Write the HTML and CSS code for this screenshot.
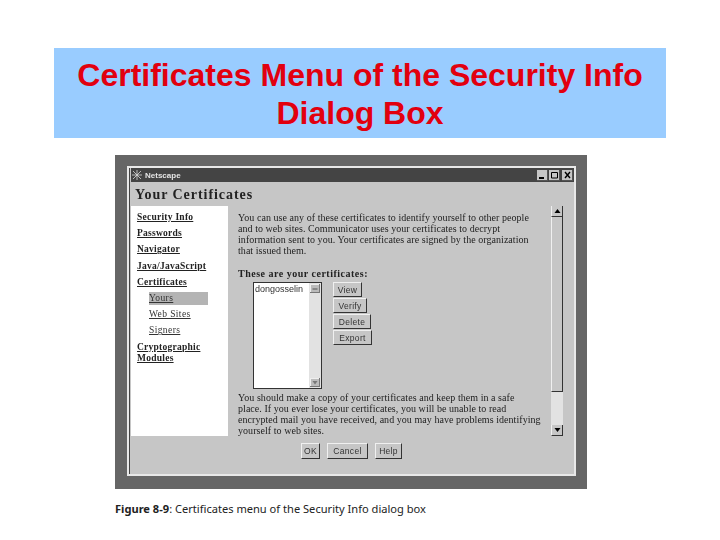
FILE: index.html
```html
<!DOCTYPE html>
<html lang="en">

<head>
    <meta charset="UTF-8" />
    <title>Certificates Menu of the Security Info Dialog Box</title>
    <link rel="stylesheet" href="styles.css">
</head>

<body>
    <header class="slide-title">
        <h1>Certificates Menu of the Security Info<br>Dialog Box</h1>
    </header>

    <main class="figure">
        <div class="frame">
            <div class="window">
                <div class="titlebar">
                    <svg class="app-icon" viewBox="0 0 10 10" width="10" height="10">
                        <path d="M5 0V10M0 5H10M1 1L9 9M9 1L1 9" stroke="#d8d8d8" stroke-width="0.8" />
                    </svg>
                    <span class="app-name">Netscape</span>
                    <div class="controls">
                        <span class="ctl">
                            <svg viewBox="0 0 11 10" width="11" height="10"><path d="M2 8H7" stroke="#000" stroke-width="2" /></svg>
                        </span>
                        <span class="ctl">
                            <svg viewBox="0 0 11 10" width="11" height="10"><path d="M2.5 2.5H8.5V8H2.5Z" stroke="#000" fill="none" /></svg>
                        </span>
                        <span class="ctl ctl-close">
                            <svg viewBox="0 0 11 10" width="11" height="10"><path d="M3 2L8 8M8 2L3 8" stroke="#000" stroke-width="1.4" /></svg>
                        </span>
                    </div>
                </div>

                <h2 class="heading">Your Certificates</h2>

                <div class="panes">
                    <nav class="sidebar">
                        <a class="nav-item">Security Info</a>
                        <a class="nav-item">Passwords</a>
                        <a class="nav-item">Navigator</a>
                        <a class="nav-item">Java/JavaScript</a>
                        <a class="nav-item">Certificates</a>
                        <a class="nav-sub nav-sub-active">Yours</a>
                        <a class="nav-sub">Web Sites</a>
                        <a class="nav-sub">Signers</a>
                        <a class="nav-item nav-wrap">Cryptographic<br>Modules</a>
                    </nav>

                    <section class="content">
                        <p class="intro">You can use any of these certificates to identify yourself to other people<br>and to web sites. Communicator uses your certificates to decrypt<br>information sent to you. Your certificates are signed by the organization<br>that issued them.</p>
                        <h3 class="list-label">These are your certificates:</h3>

                        <div class="cert-row">
                            <div class="listbox">
                                <div class="listbox-items">dongosselin</div>
                                <div class="listbox-scroll">
                                    <span class="arrow-btn">
                                        <svg viewBox="0 0 10 9" width="10" height="9"><path d="M2.5 5H7.5" stroke="#555" /></svg>
                                    </span>
                                    <span class="arrow-btn">
                                        <svg viewBox="0 0 10 9" width="10" height="9"><path d="M5 6.5L7.5 3H2.5Z" fill="#777" /></svg>
                                    </span>
                                </div>
                            </div>
                            <div class="cert-actions">
                                <button class="btn btn-view">View</button>
                                <button class="btn btn-verify">Verify</button>
                                <button class="btn btn-delete">Delete</button>
                                <button class="btn btn-export">Export</button>
                            </div>
                        </div>

                        <p class="note">You should make a copy of your certificates and keep them in a safe<br>place. If you ever lose your certificates, you will be unable to read<br>encrypted mail you have received, and you may have problems identifying<br>yourself to web sites.</p>
                    </section>

                    <div class="scrollbar">
                        <span class="sb-btn">
                            <svg viewBox="0 0 11 10" width="11" height="10"><path d="M5.5 3L8.5 7H2.5Z" fill="#000" /></svg>
                        </span>
                        <span class="sb-thumb"></span>
                        <span class="sb-track"></span>
                        <span class="sb-btn">
                            <svg viewBox="0 0 11 10" width="11" height="10"><path d="M5.5 7L8.5 3H2.5Z" fill="#000" /></svg>
                        </span>
                    </div>
                </div>

                <div class="footer">
                    <button class="btn btn-ok">OK</button>
                    <button class="btn btn-cancel">Cancel</button>
                    <button class="btn btn-help">Help</button>
                </div>
            </div>
        </div>

        <p class="caption"><b>Figure 8-9</b>: Certificates menu of the Security Info dialog box</p>
    </main>
</body>

</html>
```

FILE: styles.css
```css
* {
    margin: 0;
    padding: 0;
    box-sizing: border-box;
}

body {
    background-color: #fff;
    font-family: 'Liberation Serif', serif;
}

.slide-title {
    margin: 48px 54px 0;
    height: 90px;
    background-color: #99ccff;
    padding-top: 8px;
    text-align: center;
}

.slide-title h1 {
    font-family: 'Liberation Sans', sans-serif;
    font-size: 32px;
    line-height: 38px;
    font-weight: bold;
    color: #e2000f;
}

.figure {
    margin: 17px 0 0 115px;
    width: 472px;
}

/* the screenshot inside the slide is a soft scan */
.frame {
    height: 334px;
    background-color: #666;
    padding: 11px 11px 13px 12px;
    filter: blur(0.4px);
}

.window {
    height: 310px;
    background-color: #c6c6c6;
    border: 2px solid #e8e8e8;
    box-shadow: inset 1px 0 0 #444;
    display: flex;
    flex-direction: column;
    padding-left: 2px;
}

.titlebar {
    height: 14px;
    flex: none;
    background-color: #444;
    display: flex;
    align-items: center;
    padding-left: 1px;
}

.app-name {
    margin-left: 3px;
    font-family: 'Liberation Sans', sans-serif;
    font-size: 8px;
    font-weight: bold;
    color: #e4e4e4;
}

.controls {
    margin-left: auto;
    display: flex;
    gap: 1px;
    padding-right: 1px;
}

.ctl {
    width: 11px;
    height: 11px;
    display: block;
    background-color: #c6c6c6;
    box-shadow: inset -1px -1px 0 #555;
}

.ctl svg,
.sb-btn svg,
.arrow-btn svg {
    display: block;
}

.ctl-close {
    margin-left: 1px;
}

.heading {
    height: 24px;
    flex: none;
    padding: 4px 0 0 4px;
    font-size: 14px;
    line-height: 18px;
    font-weight: bold;
    letter-spacing: 0.95px;
    color: #222;
}

.panes {
    height: 230px;
    flex: none;
    display: flex;
}

.sidebar {
    width: 97px;
    flex: none;
    background-color: #fff;
    padding-top: 3px;
    display: flex;
    flex-direction: column;
}

.nav-item,
.nav-sub {
    display: block;
    height: 16.2px;
    font-size: 9.5px;
    line-height: 16px;
    color: #222;
    text-decoration: underline;
}

.nav-item {
    margin-left: 6px;
    font-weight: bold;
    letter-spacing: 0.25px;
}

.nav-sub {
    margin-left: 18px;
    width: 59px;
    letter-spacing: 0.4px;
    color: #333;
}

.nav-sub-active {
    background-color: #b4b4b4;
    height: 13px;
    line-height: 13px;
    margin-top: 2px;
    margin-bottom: 1.2px;
}

.nav-wrap {
    height: auto;
    line-height: 11px;
    margin-top: 3px;
}

.content {
    width: 323px;
    flex: none;
    padding: 6px 0 0 10px;
    font-size: 10px;
    line-height: 11px;
    color: #222;
}

.intro,
.note {
    white-space: nowrap;
    letter-spacing: 0.05px;
}

.list-label {
    margin-top: 12px;
    font-size: 10px;
    line-height: 11px;
    font-weight: bold;
    letter-spacing: 0.5px;
}

.cert-row {
    margin: 3px 0 0 15px;
    display: flex;
    gap: 11px;
    align-items: flex-start;
}

.listbox {
    width: 69px;
    height: 107px;
    display: flex;
    border: 1px solid #333;
    flex: none;
}

.listbox-items {
    width: 55px;
    background-color: #fff;
    padding: 1px 0 0 1px;
    font-family: 'Liberation Sans', sans-serif;
    font-size: 9px;
    line-height: 11px;
    overflow: hidden;
    color: #333;
}

.listbox-scroll {
    flex: 1;
    background-color: #e2e2e2;
    display: flex;
    flex-direction: column;
    justify-content: space-between;
    align-items: center;
    padding: 1px 0;
}

.arrow-btn {
    display: block;
    width: 10px;
    height: 9px;
    background-color: #bbb;
    box-shadow: inset -1px -1px 0 #777, inset 1px 1px 0 #eee;
}

.cert-actions {
    display: flex;
    flex-direction: column;
    align-items: flex-start;
    gap: 1px;
}

.btn {
    height: 15px;
    display: block;
    background-color: #c6c6c6;
    border: 1px solid;
    border-color: #f0f0f0 #333 #333 #f0f0f0;
    font-family: 'Liberation Sans', sans-serif;
    font-size: 8.5px;
    letter-spacing: 0.3px;
    color: #333;
}

.btn-view { width: 29px; }
.btn-verify { width: 34px; }
.btn-delete { width: 38px; }
.btn-export { width: 39px; }

.note {
    margin-top: 3px;
}

.scrollbar {
    width: 12px;
    flex: none;
    display: flex;
    flex-direction: column;
}

.sb-btn {
    height: 11px;
    flex: none;
    background-color: #c6c6c6;
    border-left: 1px solid #f0f0f0;
    border-right: 1px solid #333;
    border-bottom: 1px solid #333;
}

.sb-thumb {
    height: 175px;
    flex: none;
    background-color: #c6c6c6;
    border-left: 1px solid #f0f0f0;
    border-right: 1px solid #333;
    border-bottom: 1px solid #333;
}

.sb-track {
    flex: 1;
    background-color: #e2e2e2;
}

.footer {
    height: 38px;
    flex: none;
    padding: 7px 2px 0 0;
    display: flex;
    justify-content: center;
    align-items: flex-start;
    gap: 7px;
}

.footer .btn {
    height: 16px;
}

.btn-ok { width: 19px; }
.btn-cancel { width: 41px; }
.btn-help { width: 27px; }

.caption {
    margin-top: 13px;
    font-family: 'Noto Sans', sans-serif;
    font-size: 11.1px;
    line-height: 14px;
    color: #222;
}
```
